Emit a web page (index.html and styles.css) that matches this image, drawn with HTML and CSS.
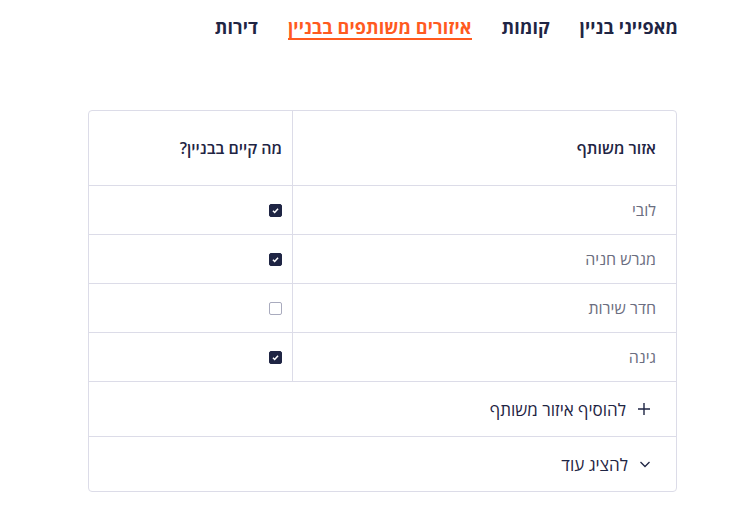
FILE: index.html
```html
<!DOCTYPE html>
<html lang="he" dir="rtl">
<head>
    <meta charset="UTF-8">
    <meta name="viewport" content="width=device-width, initial-scale=1.0">
    <title>איזורים משותפים בבניין</title>
    <link rel="stylesheet" href="styles.css">
</head>
<body>

<div class="page">

    <!-- Tabs -->
    <nav class="tabs">
        <a class="tab">מאפייני בניין</a>
        <a class="tab">קומות</a>
        <a class="tab active">איזורים משותפים בבניין</a>
        <a class="tab">דירות</a>
    </nav>

    <!-- Shared areas card -->
    <div class="card">
        <table class="areas">
            <thead>
                <tr>
                    <th class="col-name">אזור משותף</th>
                    <th class="col-check">מה קיים בבניין?</th>
                </tr>
            </thead>
            <tbody>
                <tr>
                    <td class="col-name">לובי</td>
                    <td class="col-check"><span class="box checked"></span></td>
                </tr>
                <tr>
                    <td class="col-name">מגרש חניה</td>
                    <td class="col-check"><span class="box checked"></span></td>
                </tr>
                <tr>
                    <td class="col-name">חדר שירות</td>
                    <td class="col-check"><span class="box"></span></td>
                </tr>
                <tr>
                    <td class="col-name">גינה</td>
                    <td class="col-check"><span class="box checked"></span></td>
                </tr>
            </tbody>
        </table>

        <div class="action">
            <svg width="14" height="14" viewBox="0 0 14 14"><path d="M7 1v12M1 7h12" stroke="#1f2544" stroke-width="1.4" fill="none"/></svg>
            <span>להוסיף איזור משותף</span>
        </div>
        <div class="action">
            <svg width="12" height="12" viewBox="0 0 12 12"><path d="M1.5 4l4.5 4.5L10.5 4" stroke="#1f2544" stroke-width="1.3" fill="none"/></svg>
            <span>להציג עוד</span>
        </div>
    </div>

</div>

</body>
</html>
```

FILE: styles.css
```css
body {
    margin: 0;
    font-family: "Open Sans", "Liberation Sans", sans-serif;
    color: #1f2544;
    background: #fff;
}
.page {
    margin: 0 58px 0 88px;
}
.tabs {
    display: flex;
    gap: 30px;
    padding-top: 16px;
    margin-right: -1px;
}
.tab {
    font-size: 18px;
    font-weight: 700;
    line-height: 22px;
    letter-spacing: 0.1px;
    border-bottom: 2px solid transparent;
    color: #1f2544;
}
.tab.active {
    color: #ff5a1f;
    border-bottom-color: #ff5a1f;
}
.card {
    margin-top: 70px;
    border: 1px solid #dcdce8;
    border-radius: 4px;
}
.areas {
    width: 100%;
    border-collapse: collapse;
}
.areas th, .areas td {
    text-align: right;
    border-bottom: 1px solid #dcdce8;
    font-size: 16px;
}
.areas th {
    height: 74px;
    font-weight: 600;
    color: #1f2544;
}
.areas td {
    height: 48px;
    color: #6b6e80;
}
.col-name {
    padding: 0 20px 0 10px;
    width: 353px;
    border-left: 1px solid #dcdce8;
}
.col-check {
    padding: 0 10px;
}
.box {
    display: block;
    width: 13px;
    height: 13px;
    box-sizing: border-box;
    border: 1px solid #a9abbe;
    border-radius: 2px;
}
.box.checked {
    background: #1f2544 url("data:image/svg+xml;utf8,<svg xmlns='http://www.w3.org/2000/svg' viewBox='0 0 13 13'><path d='M3.5 6.8l2 2 4-4.5' stroke='white' stroke-width='1.8' fill='none'/></svg>") no-repeat center;
    border-color: #1f2544;
}
.action {
    display: flex;
    align-items: center;
    gap: 11px;
    padding: 0 25px;
    height: 54px;
    font-size: 17px;
    color: #1f2544;
}
.action + .action {
    border-top: 1px solid #dcdce8;
}
```
